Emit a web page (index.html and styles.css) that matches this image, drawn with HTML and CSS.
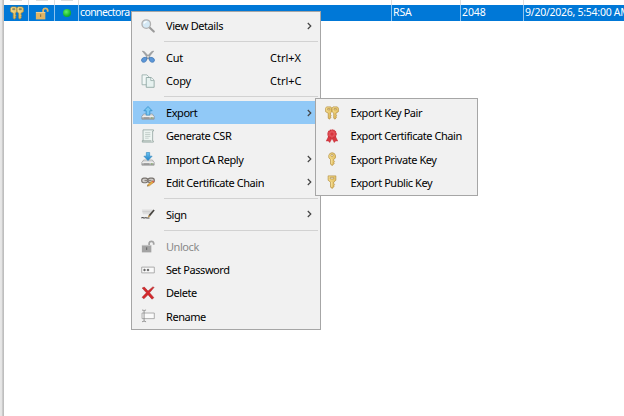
FILE: index.html
```
<!DOCTYPE html>
<html lang="en">
<head>
<meta charset="utf-8">
<title>Key store entries</title>
<link rel="stylesheet" href="styles.css">
</head>
<body>
<svg class="defs" width="0" height="0" aria-hidden="true">
  <defs>
    <linearGradient id="gold" x2="1" y2="1"><stop stop-color="#fbe69a"/><stop offset="1" stop-color="#d9b04e"/></linearGradient>
    <linearGradient id="blue" x2="0" y2="1"><stop stop-color="#6cc6f5"/><stop offset="1" stop-color="#1f7fc4"/></linearGradient>
    <linearGradient id="metal" x2="0" y2="1"><stop stop-color="#f1f1f1"/><stop offset="1" stop-color="#a9a9a9"/></linearGradient>
    <symbol id="pair" viewBox="0 0 16 16">
      <g fill="url(#gold)" stroke="#b38d3b" stroke-width=".8" fill-rule="evenodd">
        <path d="M1.8 1h4.8l1.2 1.5v4L6.2 8v1.6l.8 1-.8 1 .6 1.2-1.6 2.2L3.7 14V8.2L.7 6.5v-4zM3 2.9v1.5h2.6V2.9z"/>
        <path d="M9.2 1h4.9l1.2 1.5v4l-2.8 1.7v1.4l.8 1-.8 1 .6 1.2-1.6 2.2L10 14V8.2L8.1 6.5v-4zM10.3 2.9v1.5H13V2.9z"/>
      </g>
    </symbol>
    <symbol id="key" viewBox="0 0 16 16">
      <path fill="url(#gold)" stroke="#b38d3b" stroke-width=".8" fill-rule="evenodd" d="M8 .8a4.2 4.2 0 0 1 1.9 7.9v1l1 1-1 1 .8 1-2.3 2.8L6.4 14V8.7A4.2 4.2 0 0 1 8 .8zM8 2.5a1.3 1.3 0 1 0 0 2.6 1.3 1.3 0 0 0 0-2.6z"/>
      <path d="M7.7 8v5.6" stroke="#fff0b0" stroke-width=".8"/>
    </symbol>
    <symbol id="pubkey" viewBox="0 0 16 16">
      <path fill="url(#gold)" stroke="#b38d3b" stroke-width=".8" fill-rule="evenodd" d="M3.6 1h8.8v5L9.9 8.2v1.4l1 1-1 1 .7 1-2.2 2.7L6.4 14V8.2L3.6 6zM6 2.7v1.8h4V2.7z"/>
      <path d="M7.7 8v5.6" stroke="#fff0b0" stroke-width=".8"/>
    </symbol>
    <symbol id="lock" viewBox="0 0 16 16">
      <path d="M9.3 8V4.6a2.7 2.7 0 0 1 5.2 0v2" fill="none" stroke="currentColor" stroke-width="2"/>
      <path fill="currentColor" d="M1 6.8h10.8v8.5H1z"/>
      <path d="M6.4 9.5v3" stroke="#0005" stroke-width="1.4"/>
      <path d="M1 7.4h10.8" stroke="#fff6"/>
    </symbol>
    <symbol id="search" viewBox="0 0 16 16">
      <path d="M9.8 9.8l4.8 4.6" stroke="#9a9a9a" stroke-width="2.4" stroke-linecap="round"/>
      <circle cx="6" cy="5.8" r="4.9" fill="#d5e9f5" stroke="#b0b0b0" stroke-width="1.5"/>
      <path d="M3.4 5.4A3 3 0 0 1 6.5 3" fill="none" stroke="#fff" stroke-width="1.4"/>
    </symbol>
    <symbol id="cut" viewBox="0 0 16 16">
      <path d="M1.4 1.2l2.4.6 7 7.4-1.8 1.6zM14.6 1.2l-2.4.6-7 7.4L7 10.8z" fill="#a2a5a7" stroke="#85878a" stroke-width=".5"/>
      <path d="M6.9 9C5 7.6.8 8.6.6 11.5c-.2 3 3.8 3.2 5.2 1.2zM9.1 9c1.9-1.4 6.1-.4 6.3 2.5.2 3-3.8 3.2-5.2 1.2z" fill="#5c97d8" stroke="#3f76b5" stroke-width=".9"/>
    </symbol>
    <symbol id="copy" viewBox="0 0 16 16">
      <path d="M1.2 1h5.5l2 2v9.3H1.2z" fill="#f1f7f6" stroke="#90a8a5" stroke-width=".9"/>
      <path d="M6 4h5.5L15 7.2v8H6z" fill="#e7f2f0" stroke="#849e9a" stroke-width=".9"/>
      <path d="M11.2 4.2v3.3h3.5" fill="#fff" stroke="#849e9a" stroke-width=".8"/>
    </symbol>
    <symbol id="tray" viewBox="0 0 16 16">
      <path d="M3 9.2h10l2 2.8v3H1v-3z" fill="url(#metal)" stroke="#858585" stroke-width=".7"/>
      <path d="M1.4 12.1h13.2" stroke="#fff" stroke-width=".8"/>
      <path d="M3 13.6h6.5" stroke="#777" stroke-width=".8"/>
      <path d="M11.6 13.6h1.6" stroke="#69a83a"/>
    </symbol>
    <symbol id="export" viewBox="0 0 16 16">
      <use href="#tray"/>
      <path d="M8 .6l4.7 4.8h-2.6v5H5.9v-5H3.3z" fill="#7cc9f3" stroke="#318cc9" stroke-width=".9"/>
    </symbol>
    <symbol id="import" viewBox="0 0 16 16">
      <use href="#tray"/>
      <path d="M6.1.6h3.8v4.2h2.8L8 9.8 3.3 4.8h2.8z" fill="url(#blue)" stroke="#2c83bd" stroke-width=".7"/>
    </symbol>
    <symbol id="csr" viewBox="0 0 16 16">
      <path d="M2.3 1h12v1.3h-1v11.4h.8V15H1.5v-1.6h.9z" fill="#edf4f1" stroke="#93a5a0" stroke-width=".9"/>
      <path d="M4.7 4.2h6M4.7 6.3h6M4.7 8.4h6M4.7 10.5h4" stroke="#b9c6c2" stroke-width=".9"/>
      <path d="M1.8 13.6h10" stroke="#899a95"/>
    </symbol>
    <symbol id="chain" viewBox="0 0 16 16">
      <g fill="#d2cfcc" stroke="#77716c" stroke-width="1.3">
        <rect x=".8" y="3.6" width="7" height="5.2" rx="2.4"/>
        <rect x="7.9" y="3.6" width="7.3" height="5.2" rx="2.4"/>
        <path d="M4 6.3h8" stroke="#8d8580" stroke-width="1.5"/>
      </g>
      <path d="M7.3 12.8l.8-2.2 5-4 1.6 1.8-5.1 4z" fill="#eaae42" stroke="#a47735" stroke-width=".5"/>
      <path d="M12.5 7l1.3-1 1.6 1.8-1.2 1z" fill="#cc5c51"/>
      <path d="M7.2 12.9l1.4-.4-.8-.8z" fill="#333"/>
    </symbol>
    <symbol id="sign" viewBox="0 0 16 16">
      <path d="M1 2.8h12v5.6H2.2z" fill="#dedede"/>
      <path d="M1.5 5.4h9" stroke="#c9c9c9"/>
      <path d="M.4 12.6c2-2 2.2.8 3.9-.2 1.2-.8 1.5.8 5.4.1" fill="none" stroke="#444" stroke-width="1.2"/>
      <path d="M7.9 11.9l1.3-3.2 5-5.9 1.5 1.1-5.1 6.4z" fill="#494642"/>
      <path d="M7.6 12.4L8.9 9.2l1.8 1.3z" fill="#d0a254"/>
    </symbol>
    <symbol id="password" viewBox="0 0 16 16">
      <path d="M.8 4.7h14.4v6.6H.8z" fill="#f9f9f9" stroke="#999" stroke-width=".9"/>
      <path d="M2.5 8h3M6.5 8h3M4 6.5v3M8 6.5v3M2.9 6.9l2.2 2.2M2.9 9.1l2.2-2.2M6.9 6.9l2.2 2.2M6.9 9.1l2.2-2.2" stroke="#444" stroke-width=".6"/>
    </symbol>
    <symbol id="delete" viewBox="0 0 16 16">
      <path d="M1.3 2.3L3.8 1.2 8 5.8 13.5 1l1.5.5-5.2 6.2 4.9 5.6-2.2 1.7L8 9.9l-4.7 4.8-2.1-1.8 5-5.1z" fill="#d5282c" stroke="#a52a2d" stroke-width=".6"/>
    </symbol>
    <symbol id="rename" viewBox="0 0 16 16">
      <path d="M1.2 4.6h14v6.4h-14z" fill="#fafafa" stroke="#999" stroke-width=".9"/>
      <path d="M1.2 1.2c1.2 0 1.8.3 2.3.8.5-.5 1.1-.8 2.3-.8M3.5 2v12M1.2 14.5c1.2 0 1.8-.3 2.3-.8.5.5 1.1.8 2.3.8" fill="none" stroke="#888" stroke-width="1"/>
    </symbol>
    <symbol id="seal" viewBox="0 0 16 16">
      <path d="M4.2 8L1.4 13.8l2.4-.2 1.6 1.9L8 10.8l2.6 4.7 1.6-1.9 2.4.2L11.8 8z" fill="#d83b43" stroke="#c22a32" stroke-width=".5"/>
      <circle cx="8" cy="5.8" r="4.7" fill="#e14d54" stroke="#cb323a" stroke-width="1.4" stroke-dasharray="1.6 .5"/>
      <circle cx="8" cy="5.8" r="2.4" fill="#d8353e" stroke="#ea6d73" stroke-width=".6"/>
    </symbol>
    <symbol id="chev" viewBox="0 0 5 8"><path d="M.8 1l3 3-3 3" fill="none" stroke="currentColor" stroke-width="1.2"/></symbol>
  </defs>
</svg>
<main class="window">
  <section class="table">
    <div class="row previous"><span class="cell"><i class="stub"></i></span><span class="cell"><i class="stub"></i></span><span class="cell"><i class="stub"></i></span><span class="cell"></span><span class="cell"></span><span class="cell"></span><span class="cell"></span></div>
    <div class="row selected">
      <span class="cell pic"><svg class="icon"><use href="#pair"/></svg></span>
      <span class="cell pic"><svg class="icon gold"><use href="#lock"/></svg></span>
      <span class="cell pic"><i class="dot"></i></span>
      <span class="cell name">connectora</span>
      <span class="cell">RSA</span>
      <span class="cell">2048</span>
      <span class="cell date">9/20/2026, 5:54:00 AM</span>
    </div>
  </section>
</main>
<nav class="menu main-menu">
  <div class="item"><svg class="icon"><use href="#search"/></svg><span class="label">View Details</span><svg class="chev"><use href="#chev"/></svg></div>
  <hr>
  <div class="item"><svg class="icon"><use href="#cut"/></svg><span class="label short">Cut</span><span class="hint">Ctrl+X</span></div>
  <div class="item"><svg class="icon"><use href="#copy"/></svg><span class="label short">Copy</span><span class="hint">Ctrl+C</span></div>
  <hr>
  <div class="item active"><svg class="icon"><use href="#export"/></svg><span class="label">Export</span><svg class="chev"><use href="#chev"/></svg></div>
  <div class="item"><svg class="icon"><use href="#csr"/></svg><span class="label">Generate CSR</span></div>
  <div class="item"><svg class="icon"><use href="#import"/></svg><span class="label">Import CA Reply</span><svg class="chev"><use href="#chev"/></svg></div>
  <div class="item"><svg class="icon"><use href="#chain"/></svg><span class="label">Edit Certificate Chain</span><svg class="chev"><use href="#chev"/></svg></div>
  <hr>
  <div class="item"><svg class="icon"><use href="#sign"/></svg><span class="label">Sign</span><svg class="chev"><use href="#chev"/></svg></div>
  <hr>
  <div class="item disabled"><svg class="icon"><use href="#lock"/></svg><span class="label">Unlock</span></div>
  <div class="item"><svg class="icon"><use href="#password"/></svg><span class="label">Set Password</span></div>
  <div class="item"><svg class="icon"><use href="#delete"/></svg><span class="label">Delete</span></div>
  <div class="item"><svg class="icon"><use href="#rename"/></svg><span class="label">Rename</span></div>
</nav>
<nav class="menu sub-menu">
  <div class="item"><svg class="icon"><use href="#pair"/></svg><span class="label">Export Key Pair</span></div>
  <div class="item"><svg class="icon"><use href="#seal"/></svg><span class="label">Export Certificate Chain</span></div>
  <div class="item"><svg class="icon"><use href="#key"/></svg><span class="label">Export Private Key</span></div>
  <div class="item"><svg class="icon"><use href="#pubkey"/></svg><span class="label">Export Public Key</span></div>
</nav>
</body>
</html>
```
FILE: styles.css
```
* { box-sizing: border-box; }
body {
  margin: 0;
  height: 416px;
  overflow: hidden;
  background: #fff;
  font-family: "Noto Sans", "Open Sans", sans-serif;
}
.defs { position: absolute; }
.window {
  height: 416px;
  padding-left: 4px;
  overflow: hidden;
  background: linear-gradient(90deg, #e9e9e9 0, #e2e2e2 2px, #b5b5b5 3px, #c8c8c8 4px, #fff 4px);
}
.row {
  display: grid;
  grid-template-columns: 25px 26px 24px 313px 69px 63px 130px;
  width: 650px;
}
.previous { height: 5px; }
.cell { border-right: 1px solid #dedede; }
.stub {
  display: block;
  width: 12px;
  height: 1px;
  margin: 0 auto;
  background: #ddd;
}
.selected {
  height: 16px;
  background: #0078d7;
  color: #fff;
  font-size: 10.5px;
  line-height: 15px;
  letter-spacing: -0.1px;
  white-space: nowrap;
}
.selected .cell { border-color: #8fc3ee; padding-left: 1px; }
.selected .name { letter-spacing: -0.6px; }
.selected .date { letter-spacing: -0.26px; }
.pic { display: flex; align-items: center; justify-content: center; }
.gold { color: #dfb565; }
.dot {
  width: 8px;
  height: 8px;
  border-radius: 50%;
  background: radial-gradient(circle at 40% 35%, #66f066, #16b52f 60%, #0a8d38);
}
.menu {
  position: absolute;
  background: #f1f1f1;
  border: 1px solid #a6a6a6;
  padding: 1.9px 1px;
  color: #000;
  font-size: 11px;
}
.main-menu { left: 131px; top: 11px; width: 190px; height: 319px; }
.sub-menu { left: 315px; top: 98px; width: 163px; height: 98px; }
.item {
  display: flex;
  align-items: center;
  height: 23.25px;
  padding-left: 8px;
  white-space: nowrap;
}
.icon { width: 14px; height: 14px; flex: none; }
.label {
  flex: 1;
  margin-left: 11px;
  letter-spacing: -0.44px;
}
.label.short { letter-spacing: -0.2px; }
.sub-menu .label { margin-left: 11.5px; }
.hint { width: 49px; }
.chev { width: 5px; height: 8px; margin-right: 7.5px; color: #444; }
.active { background: #91c9f7; }
.disabled { color: #8a8a8a; }
.disabled .icon { color: #a3a3a3; }
hr {
  height: 1px;
  margin: 3.8px 1px 3.9px 31px;
  border: 0;
  background: #d2d2d2;
}
```
